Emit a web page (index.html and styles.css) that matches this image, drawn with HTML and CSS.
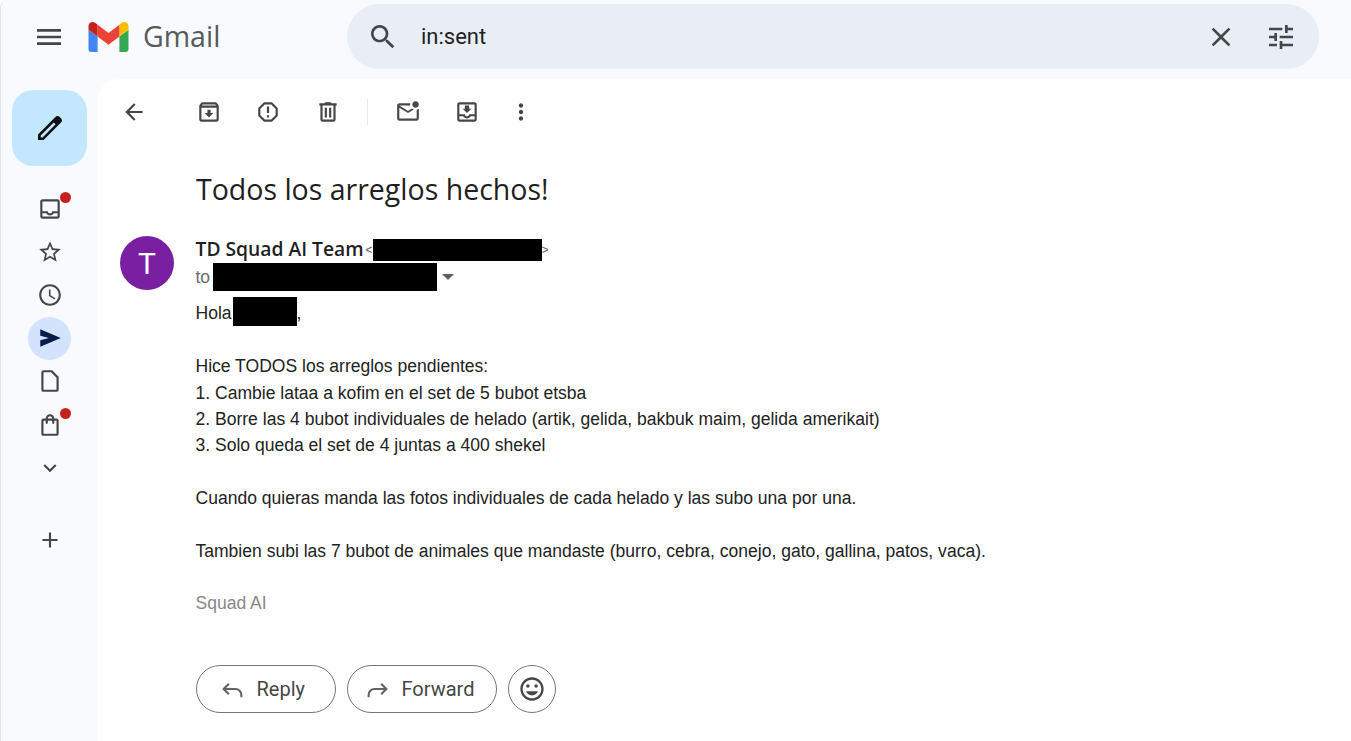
FILE: index.html
```html
<!DOCTYPE html>
<html lang="en">
<head>
    <meta charset="UTF-8">
    <meta name="viewport" content="width=device-width, initial-scale=1.0">
    <title>Todos los arreglos hechos! - Gmail</title>
    <link rel="stylesheet" href="styles.css">
</head>
<body>
    <div class="app">
        <header class="topbar">
            <div class="brand">
                <svg class="icon-menu" viewBox="0 0 24 24"><path d="M3 18h18v-2H3v2zm0-5h18v-2H3v2zm0-7v2h18V6H3z"/></svg>
                <svg class="logo" viewBox="52 42 88 66">
                    <path fill="#4285f4" d="M58 108h14V74L52 59v43c0 3.32 2.69 6 6 6"/>
                    <path fill="#34a853" d="M120 108h14c3.32 0 6-2.69 6-6V59l-20 15"/>
                    <path fill="#fbbc04" d="M120 48v26l20-15v-8c0-7.42-8.47-11.65-14.4-7.2"/>
                    <path fill="#ea4335" d="M72 74V48l24 18 24-18v26L96 92"/>
                    <path fill="#c5221f" d="M52 51v8l20 15V48l-5.6-4.2c-5.94-4.45-14.4-.22-14.4 7.2"/>
                </svg>
                <span class="wordmark">Gmail</span>
            </div>
            <div class="search">
                <svg class="icon-lg" viewBox="0 0 24 24"><path d="M15.5 14h-.79l-.28-.27C15.41 12.59 16 11.11 16 9.5 16 5.91 13.09 3 9.5 3S3 5.91 3 9.5 5.91 16 9.5 16c1.61 0 3.09-.59 4.23-1.57l.27.28v.79l5 4.99L20.49 19l-4.99-5zm-6 0C7.01 14 5 11.99 5 9.5S7.01 5 9.5 5 14 7.01 14 9.5 11.99 14 9.5 14z"/></svg>
                <span class="search-text">in:sent</span>
                <svg class="icon-lg" viewBox="0 0 24 24"><path d="M19 6.41L17.59 5 12 10.59 6.41 5 5 6.41 10.59 12 5 17.59 6.41 19 12 13.41 17.59 19 19 17.59 13.41 12z"/></svg>
                <svg class="icon-lg" viewBox="0 0 24 24"><path d="M3 17v2h6v-2H3zM3 5v2h10V5H3zm10 16v-2h8v-2h-8v-2h-2v6h2zM7 9v2H3v2h4v2h2V9H7zm14 4v-2H11v2h10zm-6-4h2V7h4V5h-4V3h-2v6z"/></svg>
            </div>
        </header>

        <div class="workspace">
            <nav class="sidebar">
                <div class="compose">
                    <svg viewBox="0 0 24 24"><path d="M20.41 4.94l-1.35-1.35c-.78-.78-2.05-.78-2.83 0L3 16.82V21h4.18L20.41 7.77c.79-.78.79-2.05 0-2.83zm-14 14.12L5 19v-1.36l9.82-9.82 1.41 1.41-9.82 9.83z"/></svg>
                </div>
                <div class="nav-item has-dot">
                    <svg viewBox="0 0 24 24"><path d="M19 3H5c-1.1 0-2 .9-2 2v14c0 1.1.9 2 2 2h14c1.1 0 2-.9 2-2V5c0-1.1-.9-2-2-2zm0 16H5v-3h3.56c.69 1.19 1.97 2 3.45 2s2.75-.81 3.45-2H19v3zm0-5h-4.99c0 1.1-.9 2-2 2s-2-.9-2-2H5V5h14v9z"/></svg>
                </div>
                <div class="nav-item">
                    <svg viewBox="0 0 24 24"><path d="M22 9.24l-7.19-.62L12 2 9.19 8.63 2 9.24l5.46 4.73L5.82 21 12 17.27 18.18 21l-1.63-7.03L22 9.24zM12 15.4l-3.76 2.27 1-4.28-3.32-2.88 4.38-.38L12 6.1l1.71 4.04 4.38.38-3.32 2.88 1 4.28L12 15.4z"/></svg>
                </div>
                <div class="nav-item">
                    <svg viewBox="0 0 24 24"><path d="M11.99 2C6.47 2 2 6.48 2 12s4.47 10 9.99 10C17.52 22 22 17.52 22 12S17.52 2 11.99 2zM12 20c-4.42 0-8-3.58-8-8s3.58-8 8-8 8 3.58 8 8-3.58 8-8 8zm.5-13H11v6l5.25 3.15.75-1.23-4.5-2.67z"/></svg>
                </div>
                <div class="nav-item nav-active">
                    <svg viewBox="0 0 24 24"><path d="M3 20v-6l8-2-8-2V4l19 8z"/></svg>
                </div>
                <div class="nav-item">
                    <svg viewBox="0 0 24 24"><path d="M6 2h8l6 6v12a2 2 0 0 1-2 2H6a2 2 0 0 1-2-2V4a2 2 0 0 1 2-2zm0 2v16h12V9l-5-5z"/></svg>
                </div>
                <div class="nav-item has-dot">
                    <svg viewBox="0 0 24 24"><path d="M18 6h-2c0-2.21-1.79-4-4-4S8 3.79 8 6H6c-1.1 0-2 .9-2 2v12c0 1.1.9 2 2 2h12c1.1 0 2-.9 2-2V8c0-1.1-.9-2-2-2zm-6-2c1.1 0 2 .9 2 2h-4c0-1.1.9-2 2-2zm6 16H6V8h2v2c0 .55.45 1 1 1s1-.45 1-1V8h4v2c0 .55.45 1 1 1s1-.45 1-1V8h2v12z"/></svg>
                </div>
                <div class="nav-item">
                    <svg viewBox="0 0 24 24"><path d="M16.59 8.59L12 13.17 7.41 8.59 6 10l6 6 6-6z"/></svg>
                </div>
                <div class="nav-item nav-add">
                    <svg viewBox="0 0 24 24"><path d="M19 13h-6v6h-2v-6H5v-2h6V5h2v6h6v2z"/></svg>
                </div>
            </nav>

            <main class="panel">
                <div class="toolbar">
                    <div class="tool tool-back"><svg viewBox="0 0 24 24"><path d="M20 11H7.83l5.59-5.59L12 4l-8 8 8 8 1.41-1.41L7.83 13H20v-2z"/></svg></div>
                    <div class="tool"><svg viewBox="0 0 24 24"><path d="M20.54 5.23l-1.39-1.68C18.88 3.21 18.47 3 18 3H6c-.47 0-.88.21-1.16.55L3.46 5.23C3.17 5.57 3 6.02 3 6.5V19c0 1.1.9 2 2 2h14c1.1 0 2-.9 2-2V6.5c0-.48-.17-.93-.46-1.27zM6.24 5h11.52l.81.97H5.44l.8-.97zM5 19V8h14v11H5zm8.45-9h-2.9v3H8l4 4 4-4h-2.55z"/></svg></div>
                    <div class="tool"><svg viewBox="0 0 24 24"><path d="M15.73 3H8.27L3 8.27v7.46L8.27 21h7.46L21 15.73V8.27L15.73 3zM19 14.9L14.9 19H9.1L5 14.9V9.1L9.1 5h5.8L19 9.1v5.8zM11 7h2v6h-2zm0 8h2v2h-2z"/></svg></div>
                    <div class="tool"><svg viewBox="0 0 24 24"><path d="M15 4V3H9v1H4v2h1v13c0 1.1.9 2 2 2h10c1.1 0 2-.9 2-2V6h1V4h-5zm2 15H7V6h10v13zM9 8h2v9H9zm4 0h2v9h-2z"/></svg></div>
                    <div class="tool-divider"></div>
                    <div class="tool tool-mail"><svg viewBox="0 0 24 24"><path d="M22 8.98V18c0 1.1-.9 2-2 2H4c-1.1 0-2-.9-2-2V6c0-1.1.9-2 2-2h10.1c-.06.32-.1.66-.1 1s.04.68.1 1H4l8 5 3.67-2.29c.47.43 1.02.76 1.63.98L12 13 4 8v10h16V9.9c.74-.15 1.42-.48 2-.92zM16 5c0 1.66 1.34 3 3 3s3-1.34 3-3-1.34-3-3-3-3 1.34-3 3z"/></svg></div>
                    <div class="tool"><svg viewBox="0 0 24 24"><path d="M19 3H5c-1.1 0-2 .9-2 2v14c0 1.1.9 2 2 2h14c1.1 0 2-.9 2-2V5c0-1.1-.9-2-2-2zm0 16H5v-3h3.56c.69 1.19 1.97 2 3.45 2s2.75-.81 3.45-2H19v3zm0-5h-4.99c0 1.1-.9 2-2 2s-2-.9-2-2H5V5h14v9zm-3-5h-2V6h-4v3H8l4 4 4-4z"/></svg></div>
                    <div class="tool tool-more"><svg viewBox="0 0 24 24"><path d="M12 8c1.1 0 2-.9 2-2s-.9-2-2-2-2 .9-2 2 .9 2 2 2zm0 2c-1.1 0-2 .9-2 2s.9 2 2 2 2-.9 2-2-.9-2-2-2zm0 6c-1.1 0-2 .9-2 2s.9 2 2 2 2-.9 2-2-.9-2-2-2z"/></svg></div>
                </div>

                <h1 class="subject">Todos los arreglos hechos!</h1>

                <div class="message">
                    <div class="avatar">T</div>
                    <div class="message-main">
                        <div class="from">
                            <span class="from-name">TD Squad AI Team</span>
                            <span class="from-mail">&lt;<span class="redact redact-from"></span>&gt;</span>
                        </div>
                        <div class="to">
                            <span>to</span>
                            <span class="redact redact-to"></span>
                            <span class="caret"></span>
                        </div>
                        <div class="body-text">
                            <p>Hola<span class="redact redact-name"></span>,</p>
                            <p>Hice TODOS los arreglos pendientes:<br>
                            1. Cambie lataa a kofim en el set de 5 bubot etsba<br>
                            2. Borre las 4 bubot individuales de helado (artik, gelida, bakbuk maim, gelida amerikait)<br>
                            3. Solo queda el set de 4 juntas a 400 shekel</p>
                            <p>Cuando quieras manda las fotos individuales de cada helado y las subo una por una.</p>
                            <p>Tambien subi las 7 bubot de animales que mandaste (burro, cebra, conejo, gato, gallina, patos, vaca).</p>
                            <p class="signature">Squad AI</p>
                        </div>
                        <div class="actions">
                            <div class="action action-reply">
                                <svg viewBox="0 0 24 24"><path d="M8.5 6.5l-5 5 5 5M3.5 11.5H15a5.5 5.5 0 0 1 5.5 5.5v2.5"/></svg>
                                <span>Reply</span>
                            </div>
                            <div class="action action-forward">
                                <svg viewBox="0 0 24 24"><path d="M15.5 6.5l5 5-5 5M20.5 11.5H9A5.5 5.5 0 0 0 3.5 17v2.5"/></svg>
                                <span>Forward</span>
                            </div>
                            <div class="action-emoji">
                                <svg viewBox="0 0 24 24"><path d="M11.99 2C6.47 2 2 6.48 2 12s4.47 10 9.99 10C17.52 22 22 17.52 22 12S17.52 2 11.99 2zM12 20c-4.42 0-8-3.58-8-8s3.58-8 8-8 8 3.58 8 8-3.58 8-8 8z"/><circle cx="15.5" cy="9.5" r="1.5"/><circle cx="8.5" cy="9.5" r="1.5"/><path d="M12 17.5c2.33 0 4.31-1.46 5.11-3.5H6.89c.8 2.04 2.78 3.5 5.11 3.5z"/></svg>
                            </div>
                        </div>
                    </div>
                </div>
            </main>
        </div>
    </div>
</body>
</html>
```

FILE: styles.css
```css
* {
    box-sizing: border-box;
}
html, body {
    height: 100%;
}
body {
    margin: 0;
    overflow: hidden;
    background: #fff;
    font-family: "Liberation Sans", Arial, sans-serif;
    color: #222;
}
svg {
    display: block;
    fill: #444746;
}
.app {
    height: 741px;
    display: flex;
    flex-direction: column;
    background: #f8fafd;
    border-left: 1px solid #e1e3e6;
    border-top-left-radius: 8px;
}

/* top bar */
.topbar {
    height: 73px;
    flex: none;
    display: flex;
    align-items: center;
}
.brand {
    width: 346px;
    display: flex;
    align-items: center;
    padding-left: 32px;
}
.icon-menu {
    width: 32px;
    height: 32px;
    fill: #444746;
}
.logo {
    width: 41px;
    height: 30px;
    margin-left: 23px;
}
.wordmark {
    margin: -2px 0 0 14px;
    font-family: "Open Sans", sans-serif;
    font-size: 28.5px;
    color: #555a5e;
}
.search {
    width: 972px;
    height: 65px;
    display: flex;
    align-items: center;
    gap: 28px;
    padding: 0 22px 0 20px;
    background: #e9eef6;
    border-radius: 33px;
}
.icon-lg {
    width: 32px;
    height: 32px;
    flex: none;
}
.search-text {
    flex: 1;
    margin-left: -6px;
    font-family: Roboto, sans-serif;
    font-size: 22px;
    color: #1f1f1f;
}

.workspace {
    flex: 1;
    display: flex;
    margin-top: 6px;
    min-height: 0;
}

/* left rail */
.sidebar {
    width: 97px;
    flex: none;
    display: flex;
    flex-direction: column;
    align-items: center;
}
.compose {
    width: 75px;
    height: 76px;
    margin-top: 11px;
    margin-bottom: 21px;
    display: flex;
    align-items: center;
    justify-content: center;
    background: #c2e7ff;
    border-radius: 21px;
}
.compose svg {
    width: 32px;
    height: 32px;
    fill: #0b0f12;
}
.nav-item {
    position: relative;
    width: 43px;
    height: 43.2px;
    flex: none;
    display: flex;
    align-items: center;
    justify-content: center;
}
.nav-item svg {
    width: 26px;
    height: 26px;
}
.has-dot::after {
    content: "";
    position: absolute;
    top: 5px;
    right: 0;
    width: 11px;
    height: 11px;
    background: #c5221f;
    border-radius: 50%;
}
.nav-active {
    background: #d3e3fd;
    border-radius: 50%;
}
.nav-active svg {
    fill: #041e49;
}
.nav-add {
    margin-top: 29px;
}

/* message panel */
.panel {
    flex: 1;
    background: #fff;
    border-top-left-radius: 21px;
}
.toolbar {
    height: 66px;
    display: flex;
    align-items: center;
    padding-left: 9px;
}
.tool {
    width: 59.5px;
    display: flex;
    justify-content: center;
}
.tool svg {
    width: 26px;
    height: 26px;
}
.tool-back {
    width: 54px;
    margin-right: 18px;
}
.tool-mail {
    padding-left: 2px;
}
.tool-more {
    width: 49px;
}
.tool-divider {
    width: 1px;
    height: 28px;
    margin: 0 10px 0 9px;
    background: #e8eaed;
}
.subject {
    margin: 24px 0 27px 98px;
    font-family: "Open Sans", sans-serif;
    font-size: 28.5px;
    font-weight: 400;
    line-height: 40px;
    color: #1f1f1f;
}
.message {
    display: flex;
    gap: 22px;
    padding-left: 22px;
}
.avatar {
    width: 54px;
    height: 54px;
    flex: none;
    display: flex;
    align-items: center;
    justify-content: center;
    background: #7b1fa2;
    border-radius: 50%;
    font-family: Roboto, sans-serif;
    font-size: 30px;
    color: #fff;
}
.message-main {
    flex: 1;
    margin-left: -0.5px;
}
.from {
    height: 27px;
    display: flex;
    align-items: center;
    gap: 2px;
}
.from-name {
    margin-top: -2px;
    font-family: "Open Sans", sans-serif;
    font-size: 19.25px;
    font-weight: 600;
    color: #1f1f1f;
}
.from-mail {
    display: flex;
    align-items: center;
    font-size: 12px;
    color: #5e5e5e;
}
.redact {
    display: inline-block;
    background: #000;
}
.redact-from {
    width: 169px;
    height: 22px;
}
.to {
    height: 28px;
    display: flex;
    align-items: center;
    gap: 3px;
    font-size: 17.5px;
    color: #6b6b6b;
}
.redact-to {
    width: 224px;
    height: 28px;
}
.caret {
    width: 0;
    height: 0;
    margin-left: 2px;
    border: 6px solid transparent;
    border-top: 6px solid #5e5e5e;
    border-bottom: 0;
}
.body-text {
    margin-top: 9px;
    font-size: 17.54px;
    line-height: 26.4px;
}
.body-text p {
    margin: 0 0 26.4px;
}
.redact-name {
    width: 64px;
    height: 29px;
    margin: -5px 0 1px 1px;
    vertical-align: middle;
}
.body-text .signature {
    margin: -1px 0 0;
    color: #888;
}
.actions {
    display: flex;
    gap: 11px;
    margin-top: 49px;
}
.action {
    height: 48px;
    display: flex;
    align-items: center;
    gap: 12px;
    border: 1px solid #747775;
    border-radius: 24px;
    font-family: Roboto, sans-serif;
    font-size: 20px;
    color: #444746;
}
.action svg {
    width: 25px;
    height: 25px;
    fill: none;
    stroke: #5f6368;
    stroke-width: 2;
}
.action-reply {
    width: 140px;
    padding-left: 23px;
}
.action-forward {
    width: 150px;
    padding-left: 17px;
}
.action-emoji {
    width: 48px;
    height: 48px;
    display: flex;
    align-items: center;
    justify-content: center;
    border: 1px solid #747775;
    border-radius: 50%;
}
.action-emoji svg {
    width: 28px;
    height: 28px;
}
```
